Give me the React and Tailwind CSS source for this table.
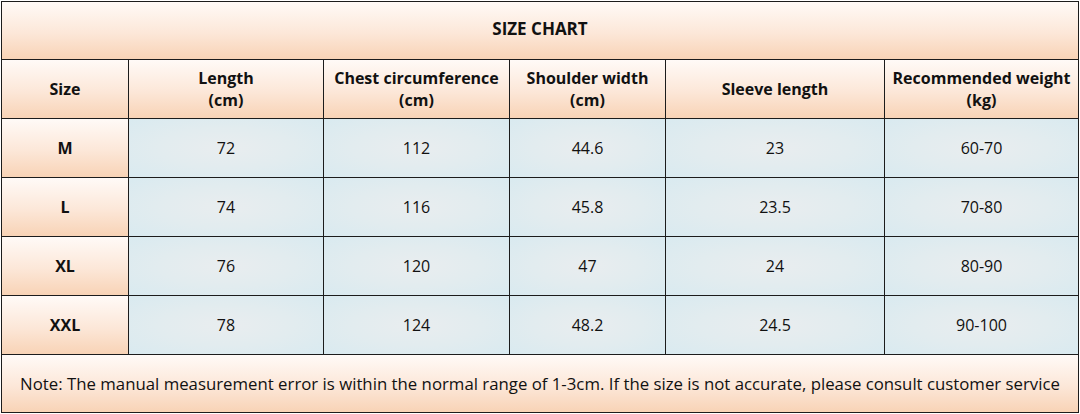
const headers = [
  ["Size"],
  ["Length", "(cm)"],
  ["Chest circumference", "(cm)"],
  ["Shoulder width", "(cm)"],
  ["Sleeve length"],
  ["Recommended weight", "(kg)"],
];

const rows = [
  ["M", "72", "112", "44.6", "23", "60-70"],
  ["L", "74", "116", "45.8", "23.5", "70-80"],
  ["XL", "76", "120", "47", "24", "80-90"],
  ["XXL", "78", "124", "48.2", "24.5", "90-100"],
];

const orange =
  "bg-[linear-gradient(to_bottom,#fffaf7_0%,#fce7d8_55%,#f8d3b6_100%)]";
const blue =
  "bg-[radial-gradient(ellipse_at_center,#e9edef_0%,#e2ecef_50%,#d9eaf0_100%)]";

export default function App() {
  return (
    <div className="w-[1080px] h-[414px] bg-white pt-px pl-px font-['Open_Sans','Noto_Sans',sans-serif] text-[#111]">
      <div className="w-[1078px] h-[412px] border border-[#1c1c1c] bg-[#1c1c1c] grid grid-cols-[126px_194px_185px_155px_218px_1fr] grid-rows-[57px_58px_58px_58px_58px_58px_1fr] gap-px">
        <div
          className={`col-span-6 ${orange} flex items-center justify-center pb-[3px] font-bold text-[17px]`}
        >
          SIZE CHART
        </div>
        {headers.map((h, i) => (
          <div
            key={i}
            className={`${orange} flex flex-col items-center justify-center pb-px font-bold text-[16px] leading-[22px] text-center`}
          >
            {h.map((line) => (
              <span key={line}>{line}</span>
            ))}
          </div>
        ))}
        {rows.map((r) =>
          r.map((cell, i) => (
            <div
              key={r[0] + i}
              className={`${i === 0 ? orange + " font-bold" : blue} flex items-center justify-center text-[16px]`}
            >
              {cell}
            </div>
          ))
        )}
        <div
          className={`col-span-6 ${orange} flex items-center justify-center text-[16.8px] whitespace-nowrap`}
        >
          Note: The manual measurement error is within the normal range of
          1-3cm. If the size is not accurate, please consult customer service
        </div>
      </div>
    </div>
  );
}
